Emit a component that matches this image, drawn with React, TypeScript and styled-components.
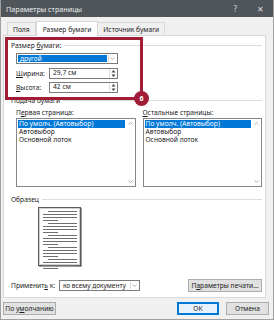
import React from 'react'
import styled, { createGlobalStyle } from 'styled-components'

const GlobalStyle = createGlobalStyle`
  html, body { margin: 0; padding: 0; background: #ffffff; }
  body { font-family: "Noto Sans", "Open Sans", sans-serif; }
  * { box-sizing: border-box; }
`

const Chevron = ({ up }: { up?: boolean }) => (
  <svg width="5" height="3" viewBox="0 0 5 3">
    <path d={up ? 'M0.5 2.5 L2.5 0.5 L4.5 2.5' : 'M0.5 0.5 L2.5 2.5 L4.5 0.5'} fill="none" stroke="#9a9a9a" strokeWidth="0.8" />
  </svg>
)

const SpinIcon = () => (
  <svg width="5" height="9" viewBox="0 0 5 9">
    <path d="M0.5 3.5 L2.5 1 L4.5 3.5 Z" fill="#444" />
    <path d="M0.5 5.5 L2.5 8 L4.5 5.5 Z" fill="#444" />
  </svg>
)

const Select = ({ value, width, selected }: { value: string; width: number; selected?: boolean }) => (
  <SelectBox style={{ width }}>
    <SelectValue selected={selected}>{value}</SelectValue>
    <ArrowCell><Chevron /></ArrowCell>
  </SelectBox>
)

const Spinner = ({ value }: { value: string }) => (
  <SpinBox>
    <SpinValue>{value}</SpinValue>
    <SpinCell><SpinIcon /></SpinCell>
  </SpinBox>
)

const items = ['По умолч. (Автовыбор)', 'Автовыбор', 'Основной лоток']

const TrayList = ({ label }: { label: React.ReactNode }) => (
  <Column>
    <FieldLabel>{label}</FieldLabel>
    <ListBox>
      <ListItems>
        {items.map((it, i) => (
          <ListItem key={it} selected={i === 0}>{it}</ListItem>
        ))}
      </ListItems>
      <ScrollTrack>
        <Chevron up />
        <Chevron />
      </ScrollTrack>
    </ListBox>
  </Column>
)

const PagePreview = () => (
  <Page>
    {[0, 1, 2, 3, 4].map((p) => (
      <Para key={p}>
        <TextLine indent={5} />
        <TextLine indent={0} />
        <TextLine indent={0} />
        <TextLine indent={0} short />
      </Para>
    ))}
  </Page>
)

export default function App() {
  return (
    <>
      <GlobalStyle />
      <Dialog>
        <WindowHeader>
          <HeaderTitle>Параметры страницы</HeaderTitle>
          <HeaderButtons>
            <span>?</span>
            <span>✕</span>
          </HeaderButtons>
        </WindowHeader>
        <TabStrip>
          <Tab>Поля</Tab>
          <Tab active>Размер бумаги</Tab>
          <Tab>Источник бумаги</Tab>
        </TabStrip>
        <Panel>
          <GroupHeader>
            <span>Размер <u>б</u>умаги:</span>
            <Rule />
          </GroupHeader>
          <Indent>
            <Select value="другой" width={102} selected />
            <FieldRow top={4}>
              <RowLabel><u>Ш</u>ирина:</RowLabel>
              <Spinner value="29,7 см" />
            </FieldRow>
            <FieldRow top={3}>
              <RowLabel><u>В</u>ысота:</RowLabel>
              <Spinner value="42 см" />
            </FieldRow>
          </Indent>
          <GroupHeader top={2}>
            <span>Подача бумаги</span>
            <Rule />
          </GroupHeader>
          <Columns>
            <TrayList label={<>П<u>е</u>рвая страница:</>} />
            <TrayList label={<><u>О</u>стальные страницы:</>} />
          </Columns>
          <GroupHeader top={7}>
            <span>Образец</span>
            <Rule />
          </GroupHeader>
          <PreviewWrap>
            <PagePreview />
          </PreviewWrap>
          <ApplyRow>
            <ApplyLabel>Применит<u>ь</u> к:</ApplyLabel>
            <Select value="ко всему документу" width={81} />
            <Spacer />
            <Button width={74}>П<u>а</u>раметры печати...</Button>
          </ApplyRow>
          <Annotation>
            <Badge>6</Badge>
          </Annotation>
        </Panel>
        <Footer>
          <Button width={53}>По у<u>м</u>олчанию</Button>
          <Spacer />
          <Button width={42} primary>ОК</Button>
          <Button width={43}>Отмена</Button>
        </Footer>
      </Dialog>
    </>
  )
}

const Dialog = styled.div`
  position: relative;
  width: 274px;
  height: 320px;
  display: flex;
  flex-direction: column;
  background: #f0f0f0;
  border-left: 1px solid #a0a0a0;
  border-right: 1px solid #a0a0a0;
  border-bottom: 1px solid #a0a0a0;
  font-size: 6.7px;
  color: #1a1a1a;
`
const WindowHeader = styled.div`
  height: 17px;
  flex: none;
  display: flex;
  align-items: center;
  justify-content: space-between;
  padding: 0 9px 0 5px;
  background-color: rgb(80, 85, 90);
  color: rgb(236, 238, 239);
`
const HeaderTitle = styled.div`
  font-size: 7.2px;
  color: rgb(236, 238, 239);
`
const HeaderButtons = styled.div`
  display: flex;
  gap: 20px;
  font-size: 8px;
  color: rgb(216, 218, 220);
`
const TabStrip = styled.div`
  height: 18px;
  flex: none;
  display: flex;
  align-items: flex-end;
  padding-left: 7px;
`
const Tab = styled.div<{ active?: boolean }>`
  height: ${(p) => (p.active ? 15 : 13)}px;
  display: flex;
  align-items: center;
  padding: 0 ${(p) => (p.active ? 6 : 5)}px;
  margin-bottom: ${(p) => (p.active ? -1 : 0)}px;
  background: ${(p) => (p.active ? '#ffffff' : '#f0f0f0')};
  border: 1px solid #d9d9d9;
  border-bottom: none;
  margin-left: ${(p) => (p.active ? 0 : -1)}px;
  position: relative;
  z-index: ${(p) => (p.active ? 1 : 0)};
  white-space: nowrap;
`
const Panel = styled.div`
  position: relative;
  height: 263px;
  flex: none;
  margin: 0 7px 0 2px;
  padding: 4px 3px 0 7px;
  display: flex;
  flex-direction: column;
  background: #ffffff;
  border: 1px solid #d9d9d9;
`
const GroupHeader = styled.div<{ top?: number }>`
  display: flex;
  align-items: center;
  gap: 3px;
  height: 10px;
  margin-top: ${(p) => p.top ?? 0}px;
  white-space: nowrap;
`
const Rule = styled.div`
  flex: 1;
  height: 1px;
  background: #dcdcdc;
`
const Indent = styled.div`
  margin: 3px 0 0 5px;
  display: flex;
  flex-direction: column;
`
const SelectBox = styled.div`
  height: 11px;
  display: flex;
  background: #ffffff;
  border: 1px solid #7a7a7a;
  padding: 1px;
`
const SelectValue = styled.div<{ selected?: boolean }>`
  flex: 1;
  height: 7px;
  align-self: center;
  padding-left: 2px;
  font-size: 6.5px;
  line-height: 7px;
  background: ${(p) => (p.selected ? '#0078d7' : 'transparent')};
  color: ${(p) => (p.selected ? '#ffffff' : '#1a1a1a')};
  white-space: nowrap;
`
const ArrowCell = styled.div`
  width: 8px;
  display: flex;
  align-items: center;
  justify-content: center;
  border-left: 1px solid #d6d6d6;
  margin-left: 1px;
`
const FieldRow = styled.div<{ top: number }>`
  display: flex;
  align-items: center;
  margin-top: ${(p) => p.top}px;
`
const RowLabel = styled.div`
  width: 33px;
`
const SpinBox = styled.div`
  width: 69px;
  height: 11px;
  display: flex;
  border: 1px solid #7a7a7a;
  background: #ffffff;
`
const SpinValue = styled.div`
  flex: 1;
  display: flex;
  align-items: center;
  padding-left: 3px;
  line-height: 1;
`
const SpinCell = styled.div`
  width: 8px;
  display: flex;
  align-items: center;
  justify-content: center;
  border-left: 1px solid #e0e0e0;
`
const Columns = styled.div`
  display: flex;
  gap: 7px;
  margin: 3px 0 0 5px;
`
const Column = styled.div`
  flex: 1;
  display: flex;
  flex-direction: column;
`
const FieldLabel = styled.div`
  height: 10px;
  line-height: 9px;
`
const ListBox = styled.div`
  height: 69px;
  display: flex;
  border: 1px solid #828790;
  background: #ffffff;
`
const ListItems = styled.div`
  flex: 1;
  padding: 1px;
  display: flex;
  flex-direction: column;
`
const ListItem = styled.div<{ selected?: boolean }>`
  height: 8px;
  line-height: 8px;
  padding-left: 1px;
  white-space: nowrap;
  background: ${(p) => (p.selected ? '#0078d7' : 'transparent')};
  color: ${(p) => (p.selected ? '#ffffff' : '#1a1a1a')};
`
const ScrollTrack = styled.div`
  width: 9px;
  display: flex;
  flex-direction: column;
  align-items: center;
  justify-content: space-between;
  padding: 3px 0;
`
const PreviewWrap = styled.div`
  margin: 3px 0 0 27px;
`
const Page = styled.div`
  width: 43px;
  height: 59px;
  padding: 3px 3px 0 4px;
  display: flex;
  flex-direction: column;
  gap: 2px;
  background: #ffffff;
  border: 1px solid #5a5a5a;
  box-shadow: 1px 1px 0 #9a9a9a, inset 0 0 0 1px #d0d0d0;
`
const Para = styled.div`
  display: flex;
  flex-direction: column;
  gap: 2px;
`
const TextLine = styled.div<{ indent: number; short?: boolean }>`
  height: 1px;
  margin-left: ${(p) => p.indent}px;
  width: ${(p) => (p.short ? '45%' : 'auto')};
  background: #6e6e6e;
`
const ApplyRow = styled.div`
  display: flex;
  align-items: center;
  margin-top: 13px;
`
const ApplyLabel = styled.div`
  width: 48px;
  white-space: nowrap;
`
const Spacer = styled.div`
  flex: 1;
`
const Button = styled.div<{ width: number; primary?: boolean }>`
  width: ${(p) => p.width}px;
  height: 13px;
  display: flex;
  align-items: center;
  justify-content: center;
  white-space: nowrap;
  background: ${(p) => (p.primary ? '#e5f1fb' : '#e1e1e1')};
  border: 1px solid ${(p) => (p.primary ? '#0078d7' : '#adadad')};
  box-shadow: ${(p) => (p.primary ? 'inset 0 0 0 1px #0078d7' : 'none')};
`
const Footer = styled.div`
  flex: 1;
  display: flex;
  align-items: flex-start;
  gap: 7px;
  padding: 4px 4px 0 2px;
`
const Annotation = styled.div`
  position: absolute;
  left: 1px;
  top: 1px;
  width: 138px;
  height: 63px;
  border: 3px solid #a11d37;
`
const Badge = styled.div`
  position: absolute;
  right: -9px;
  bottom: -9px;
  width: 15px;
  height: 15px;
  border-radius: 50%;
  background: #a11d37;
  color: #ffffff;
  font-size: 7px;
  font-weight: 700;
  display: flex;
  align-items: center;
  justify-content: center;
`
